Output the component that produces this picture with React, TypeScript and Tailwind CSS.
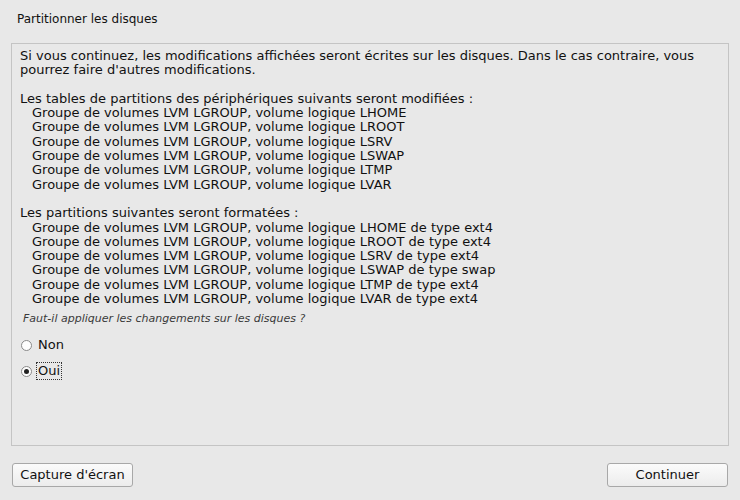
import React from "react";

const tables = ["LHOME", "LROOT", "LSRV", "LSWAP", "LTMP", "LVAR"];
const formats = [
  ["LHOME", "ext4"],
  ["LROOT", "ext4"],
  ["LSRV", "ext4"],
  ["LSWAP", "swap"],
  ["LTMP", "ext4"],
  ["LVAR", "ext4"],
];

function Radio({ checked }: { checked?: boolean }) {
  return (
    <span className="relative inline-flex h-[11px] w-[11px] items-center justify-center rounded-full border border-[#8a8a8a] bg-[#fdfdfd]">
      {checked && <span className="h-[5px] w-[5px] rounded-full bg-[#222]" />}
    </span>
  );
}

export default function App() {
  return (
    <div
      className="flex h-[500px] w-[740px] flex-col bg-[#e8e8e8] text-[13px] leading-[14.3px] text-[#111]"
      style={{ fontFamily: '"DejaVu Sans", sans-serif' }}
    >
      <div className="pl-[17px] pt-[12px] h-[43px] text-[12px] leading-[15px]">Partitionner les disques</div>
      <div className="mx-[11px] flex h-[403px] flex-col border border-[#c4c4c4] px-[8px] pt-[5px]">
        <div>
          Si vous continuez, les modifications affichées seront écrites sur les disques. Dans le cas contraire, vous
          <br />
          pourrez faire d'autres modifications.
        </div>
        <div className="h-[14.3px]" />
        <div>Les tables de partitions des périphériques suivants seront modifiées :</div>
        {tables.map((t) => (
          <div key={t} className="pl-[12px]">
            Groupe de volumes LVM LGROUP, volume logique {t}
          </div>
        ))}
        <div className="h-[14.3px]" />
        <div>Les partitions suivantes seront formatées :</div>
        {formats.map(([t, f]) => (
          <div key={t} className="pl-[12px]">
            Groupe de volumes LVM LGROUP, volume logique {t} de type {f}
          </div>
        ))}
        <div className="mt-[6px] pl-[3px] text-[11px] leading-[14px] italic text-[#3a3a3a]">
          Faut-il appliquer les changements sur les disques ?
        </div>
        <div className="mt-[10px] flex h-[18px] items-center gap-[6px] pl-[1px]">
          <Radio />
          <span>Non</span>
        </div>
        <div className="mt-[8px] flex h-[18px] items-center gap-[4px] pl-[1px]">
          <Radio checked />
          <span className="flex h-[18px] items-center border border-dotted border-[#333] px-[1px]">Oui</span>
        </div>
      </div>
      <div className="flex justify-between px-[12px] pt-[17px]">
        <button className="h-[24px] w-[121px] rounded-[3px] border border-[#a8a8a8] bg-gradient-to-b from-[#fbfbfb] to-[#ececec] text-[13px] text-[#111]">
          Capture d'écran
        </button>
        <button className="h-[24px] w-[121px] rounded-[3px] border border-[#a8a8a8] bg-gradient-to-b from-[#fbfbfb] to-[#ececec] text-[13px] text-[#111]">
          Continuer
        </button>
      </div>
    </div>
  );
}
